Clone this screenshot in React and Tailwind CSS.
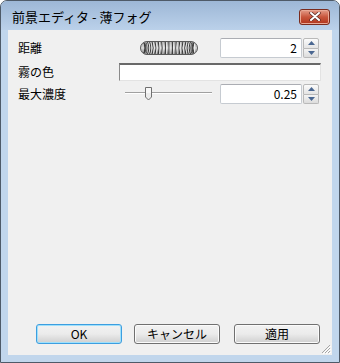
import React from 'react';

const font = { fontFamily: '"Noto Sans CJK JP", "Liberation Sans", sans-serif' };

const JogWheel = () => {
  const ridges = [];
  const n = 22;
  for (let i = 0; i <= n; i++) {
    const t = -Math.PI / 2 + (Math.PI * i) / n;
    const x = 29 + 26 * Math.sin(t);
    const bend = -4 * Math.sin(t);
    ridges.push({ x, bend, i });
  }
  return (
    <svg width="58" height="14" viewBox="0 0 58 14">
      <defs>
        <linearGradient id="jw" x1="0" y1="0" x2="0" y2="1">
          <stop offset="0" stopColor="#9a9a9a" />
          <stop offset="0.5" stopColor="#dcdcdc" />
          <stop offset="1" stopColor="#6e6e6e" />
        </linearGradient>
        <clipPath id="jc">
          <rect x="1" y="1" width="56" height="12" rx="6" />
        </clipPath>
      </defs>
      <rect x="0.5" y="0.5" width="57" height="13" rx="6.5" fill="url(#jw)" stroke="#5a5a5a" />
      <g clipPath="url(#jc)">
        {ridges.map((r) => (
          <g key={r.i}>
            <path d={`M${r.x},0 Q${r.x + r.bend},7 ${r.x},14`} fill="none" stroke="#2e2e2e" strokeWidth="0.9" />
            <path d={`M${r.x + 1.1},0 Q${r.x + 1.1 + r.bend},7 ${r.x + 1.1},14`} fill="none" stroke="#f6f6f6" strokeWidth="0.7" />
          </g>
        ))}
      </g>
    </svg>
  );
};

const Tri = ({ up }) => (
  <svg width="7" height="4" viewBox="0 0 7 4">
    <path d={up ? 'M0,4 L3.5,0 L7,4 Z' : 'M0,0 L3.5,4 L7,0 Z'} fill="#4a6791" />
  </svg>
);

const Spin = () => (
  <div className="flex flex-col w-[16px] h-[20px] ml-[1px]">
    <div className="flex-1 flex items-center justify-center border border-[#b9b9b9] rounded-t-[2px] bg-gradient-to-b from-[#fbfbfb] to-[#e4e4e4]">
      <Tri up />
    </div>
    <div className="flex-1 flex items-center justify-center border border-t-0 border-[#b9b9b9] rounded-b-[2px] bg-gradient-to-b from-[#f4f4f4] to-[#dcdcdc]">
      <Tri />
    </div>
  </div>
);

const NumBox = ({ value }) => (
  <div className="flex items-center">
    <div className="w-[82px] h-[20px] bg-white border border-[#c6cbd1] border-t-[#abadb3] rounded-[2px] flex items-center justify-end pr-[4px] text-[12px] text-black leading-none">
      {value}
    </div>
    <Spin />
  </div>
);

const Slider = () => (
  <svg width="87" height="14" viewBox="0 0 87 14">
    <rect x="0" y="5" width="87" height="1" fill="#a0a0a0" />
    <rect x="0" y="6" width="87" height="1" fill="#ffffff" />
    <path d="M20.5,0.5 H26.5 V10 L23.5,13 L20.5,10 Z" fill="#ececec" stroke="#707070" />
    <rect x="21" y="1" width="5" height="5" fill="#f8f8f8" />
  </svg>
);

const Button = ({ children, primary, className = '' }) => (
  <div
    className={`w-[86px] h-[20px] rounded-[3px] border flex items-center justify-center text-[12px] text-black leading-none bg-gradient-to-b from-[#f2f2f2] via-[#ebebeb] to-[#cfcfcf] ${
      primary ? 'border-[#3c9ee0] shadow-[inset_0_0_0_1px_#9fe0fb]' : 'border-[#707070] shadow-[inset_0_0_0_1px_#fbfbfb]'
    } ${className}`}
  >
    {children}
  </div>
);

export default function App() {
  return (
    <div style={font} className="w-[340px] h-[363px] bg-[#c1d6ec] border border-[#4e5a68] rounded-t-[7px] flex flex-col overflow-hidden">
      <div className="h-[29px] shrink-0 flex items-center pl-[11px] pr-[9px] bg-gradient-to-b from-[#9db7d6] to-[#bbd1ea]">
        <span className="text-[13px] text-black leading-none mt-[1px]">前景エディタ - 薄フォグ</span>
        <div className="ml-auto mt-[2px] w-[31px] h-[16px] rounded-[3px] border border-[#7a2b1d] bg-gradient-to-b from-[#e39c89] via-[#c8553c] to-[#b0341c] flex items-center justify-center shadow-[inset_0_0_0_1px_#e9a996]">
          <svg width="12" height="9" viewBox="0 0 12 9">
            <path d="M2,1 L10,8 M10,1 L2,8" stroke="#5a2c26" strokeWidth="3.4" strokeLinecap="round" />
            <path d="M2,1 L10,8 M10,1 L2,8" stroke="#ffffff" strokeWidth="2" strokeLinecap="round" />
          </svg>
        </div>
      </div>
      <div className="flex-1 mx-[7px] mb-[7px] bg-[#f0f0f0] flex flex-col pl-[10px] pt-[8px] relative">
        <div className="flex items-center h-[20px]">
          <div className="w-[101px] text-[12px] text-black leading-none">距離</div>
          <div className="ml-[21px] flex items-center"><JogWheel /></div>
          <div className="ml-[22px]"><NumBox value="2" /></div>
        </div>
        <div className="flex items-center h-[18px] mt-[5px]">
          <div className="w-[101px] text-[12px] text-black leading-none">霧の色</div>
          <div className="w-[202px] h-[18px] bg-white border border-[#a0a0a0] border-t-2 border-t-[#696969] border-l-[#8a8a8a] border-r-[#e3e3e3] border-b-[#e3e3e3]" />
        </div>
        <div className="flex items-center h-[20px] mt-[3px]">
          <div className="w-[101px] text-[12px] text-black leading-none">最大濃度</div>
          <div className="ml-[6px] flex items-center"><Slider /></div>
          <div className="ml-[8px]"><NumBox value="0.25" /></div>
        </div>
        <div className="flex-1" />
        <div className="flex items-center pl-[18px] mb-[11px]">
          <Button primary>OK</Button>
          <Button className="ml-[12px]">キャンセル</Button>
          <Button className="ml-[14px]">適用</Button>
        </div>
        <div className="absolute right-[1px] bottom-[1px]">
          <svg width="11" height="11" viewBox="0 0 11 11">
            <path d="M10,2 L2,10 M10,5 L5,10 M10,8 L8,10" stroke="#a5a5a5" strokeWidth="1" />
            <path d="M11,3 L3,11 M11,6 L6,11 M11,9 L9,11" stroke="#ffffff" strokeWidth="1" />
          </svg>
        </div>
      </div>
    </div>
  );
}
